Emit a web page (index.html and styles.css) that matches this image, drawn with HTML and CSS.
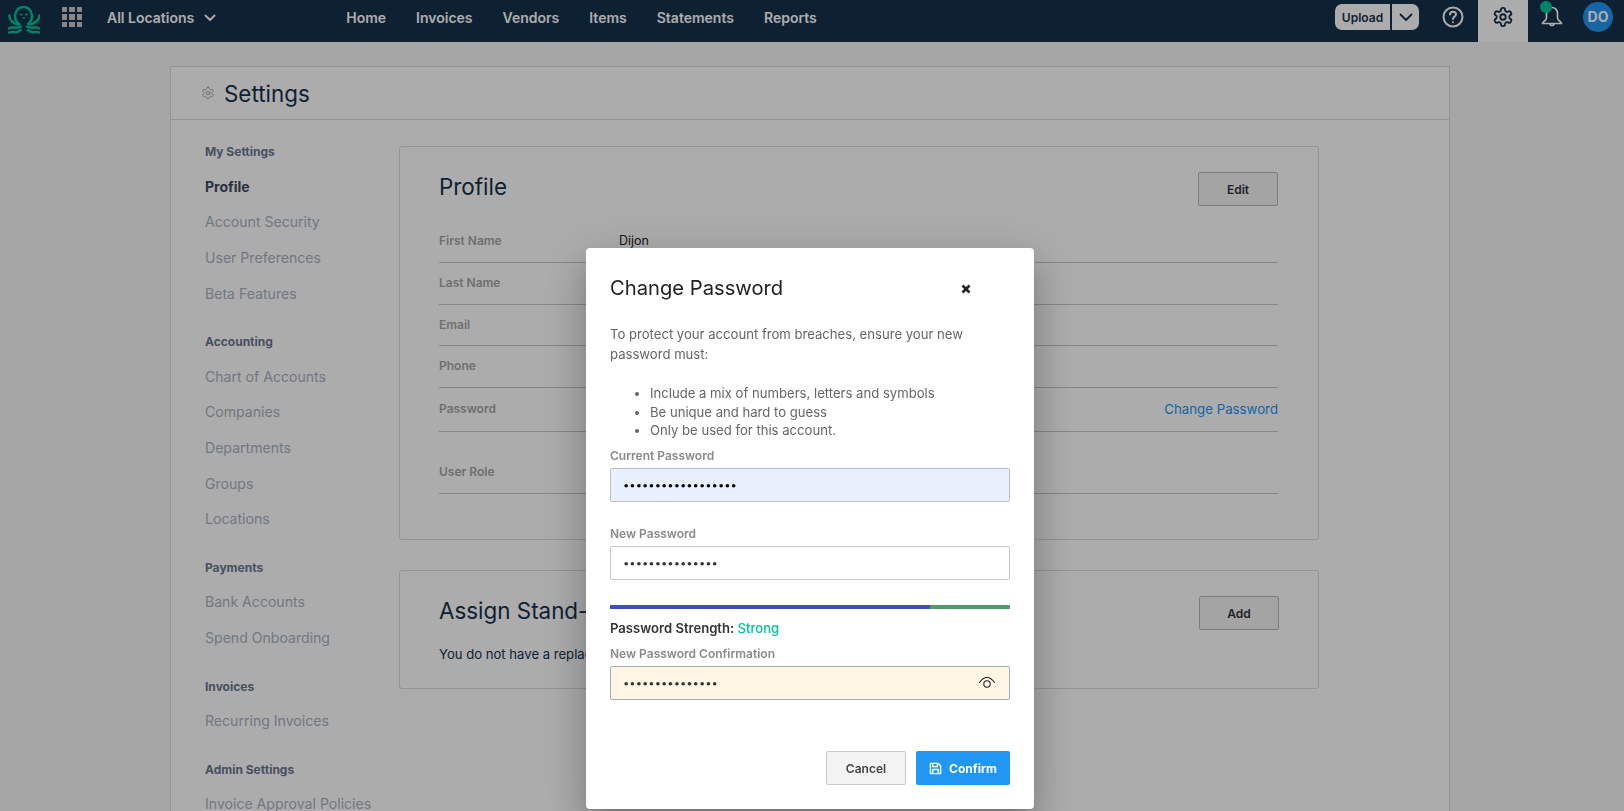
FILE: index.html
```html
<!DOCTYPE html>
<html lang="en">
<head>
<meta charset="utf-8">
<title>Settings</title>
<link rel="stylesheet" href="styles.css">
</head>
<body>
<header class="topbar">
  <svg class="logo" viewBox="8 3 32 30" width="32" height="30" fill="none" stroke="#00c49a" stroke-width="2.400" stroke-linecap="round">
    <path d="M18.500 20.500C15.500 18 14.500 14 15.500 10.500C16.800 6 20 4 23.500 4C27 4 30.200 6 31.500 10.500C32.500 14 31.500 18 28.500 20.500"/>
    <path d="M9.500 12.500C9 17 13 21 19.500 21.500M39.500 12.500C39 17 35 21 28.500 21.500" />
    <path d="M9 25.500C13 22.500 16 26.500 21 23.500M39.500 25.500C35 22.500 32 26.500 27 23.500"/>
    <path d="M9 29.500C13 27.500 17 31.500 20.500 27M39.500 29.500C35.500 27.500 31.500 31.500 28 27"/>
    <path d="M20.500 11.500h1.500M25.500 11.500h1.500M23 15h1.500" stroke-width="1.500"/>
  </svg>
  <div class="apps"><i></i><i></i><i></i><i></i><i></i><i></i><i></i><i></i><i></i></div>
  <div class="location">All Locations
    <svg width="12" height="8" viewBox="0 0 12 8" fill="none" stroke="currentColor" stroke-width="1.800" stroke-linecap="round" stroke-linejoin="round"><path d="M1.500 1.500 6 6l4.500-4.500"/></svg>
  </div>
  <nav class="mainnav">
    <a>Home</a><a>Invoices</a><a>Vendors</a><a>Items</a><a>Statements</a><a>Reports</a>
  </nav>
  <div class="upload">
    <span class="upload-label">Upload</span>
    <span class="upload-caret"><svg width="14" height="9" viewBox="0 0 14 9" fill="none" stroke="#16324c" stroke-width="1.800" stroke-linecap="round" stroke-linejoin="round"><path d="M1.500 1.500 7 7l5.500-5.500"/></svg></span>
  </div>
  <svg class="help" width="22" height="22" viewBox="0 0 22 22" fill="none" stroke="#fff" stroke-width="2" stroke-linecap="round">
    <circle cx="11" cy="11" r="9.500"/>
    <path d="M8 8.500C8 6.600 9.400 5.700 11 5.700C12.700 5.700 14 6.800 14 8.300C14 10.500 11 10.500 11 13"/>
    <path d="M11 16.200v.1"/>
  </svg>
  <div class="gear-tab">
    <svg width="22" height="22" viewBox="0 0 24 24" fill="none" stroke="#16324c" stroke-width="2" stroke-linecap="round" stroke-linejoin="round">
      <path d="M12.220 2h-.44a2 2 0 0 0-2 2v.180a2 2 0 0 1-1 1.730l-.43.250a2 2 0 0 1-2 0l-.150-.080a2 2 0 0 0-2.730.730l-.220.380a2 2 0 0 0 .730 2.730l.150.100a2 2 0 0 1 1 1.720v.510a2 2 0 0 1-1 1.740l-.150.090a2 2 0 0 0-.730 2.730l.220.380a2 2 0 0 0 2.730.730l.150-.080a2 2 0 0 1 2 0l.430.250a2 2 0 0 1 1 1.730V20a2 2 0 0 0 2 2h.440a2 2 0 0 0 2-2v-.180a2 2 0 0 1 1-1.730l.430-.250a2 2 0 0 1 2 0l.150.080a2 2 0 0 0 2.730-.730l.220-.390a2 2 0 0 0-.730-2.730l-.150-.080a2 2 0 0 1-1-1.740v-.500a2 2 0 0 1 1-1.740l.150-.090a2 2 0 0 0 .730-2.730l-.220-.380a2 2 0 0 0-2.730-.730l-.150.080a2 2 0 0 1-2 0l-.430-.250a2 2 0 0 1-1-1.730V4a2 2 0 0 0-2-2z"/>
      <circle cx="12" cy="12" r="3"/>
    </svg>
  </div>
  <div class="bell">
    <svg width="24" height="24" viewBox="0 0 24 24" fill="none" stroke="#fff" stroke-width="1.700" stroke-linecap="round" stroke-linejoin="round">
      <path d="M6.500 15V10.500C6.500 7 9 4.500 12 4.500C15 4.500 17.500 7 17.500 10.500V15C17.500 17.500 22 19.500 21.500 20.500H2.500C2 19.500 6.500 17.500 6.500 15Z"/>
      <path d="M10 21C10.300 23 13.700 23 14 21"/>
    </svg>
    <span class="bell-dot"></span>
  </div>
  <div class="avatar">DO</div>
</header>

<main class="panel">
  <div class="panel-head">
    <svg width="14" height="14" viewBox="0 0 24 24" fill="none" stroke="#8a8a8a" stroke-width="1.200" stroke-linecap="round" stroke-linejoin="round">
      <path d="M12.220 2h-.44a2 2 0 0 0-2 2v.180a2 2 0 0 1-1 1.730l-.43.250a2 2 0 0 1-2 0l-.150-.080a2 2 0 0 0-2.730.730l-.220.380a2 2 0 0 0 .730 2.730l.150.100a2 2 0 0 1 1 1.720v.510a2 2 0 0 1-1 1.740l-.150.090a2 2 0 0 0-.730 2.730l.220.380a2 2 0 0 0 2.730.730l.150-.080a2 2 0 0 1 2 0l.430.250a2 2 0 0 1 1 1.730V20a2 2 0 0 0 2 2h.440a2 2 0 0 0 2-2v-.180a2 2 0 0 1 1-1.730l.430-.250a2 2 0 0 1 2 0l.150.080a2 2 0 0 0 2.730-.730l.220-.390a2 2 0 0 0-.730-2.730l-.150-.080a2 2 0 0 1-1-1.740v-.500a2 2 0 0 1 1-1.740l.150-.090a2 2 0 0 0 .730-2.730l-.220-.380a2 2 0 0 0-2.730-.730l-.150.080a2 2 0 0 1-2 0l-.430-.250a2 2 0 0 1-1-1.730V4a2 2 0 0 0-2-2z"/>
      <circle cx="12" cy="12" r="3"/>
    </svg>
    <h1>Settings</h1>
  </div>
  <div class="panel-body">
    <aside class="sidebar">
      <section class="side-group">
        <h2>My Settings</h2>
        <a class="active">Profile</a><a>Account Security</a><a>User Preferences</a><a>Beta Features</a>
      </section>
      <section class="side-group">
        <h2>Accounting</h2>
        <a>Chart of Accounts</a><a>Companies</a><a>Departments</a><a>Groups</a><a>Locations</a>
      </section>
      <section class="side-group">
        <h2>Payments</h2>
        <a>Bank Accounts</a><a>Spend Onboarding</a>
      </section>
      <section class="side-group">
        <h2>Invoices</h2>
        <a>Recurring Invoices</a>
      </section>
      <section class="side-group">
        <h2>Admin Settings</h2>
        <a>Invoice Approval Policies</a>
      </section>
    </aside>
    <div class="content">
      <section class="card profile">
        <div class="card-head">
          <h3>Profile</h3>
          <button class="btn-ghost">Edit</button>
        </div>
        <div class="row"><span class="row-label">First Name</span><span class="row-value">Dijon</span></div>
        <div class="row"><span class="row-label">Last Name</span></div>
        <div class="row"><span class="row-label">Email</span></div>
        <div class="row"><span class="row-label">Phone</span></div>
        <div class="row row-tall"><span class="row-label">Password</span><a class="row-link">Change Password</a></div>
        <div class="row row-role"><span class="row-label">User Role</span></div>
      </section>
      <section class="card standin">
        <div class="card-head">
          <h3>Assign Stand-In</h3>
          <button class="btn-ghost">Add</button>
        </div>
        <p class="standin-text">You do not have a replacement assigned.</p>
      </section>
    </div>
  </div>
</main>

<div class="overlay">
  <div class="modal">
    <div class="modal-head">
      <h4>Change Password</h4>
      <svg class="close" width="10" height="10" viewBox="0 0 10 10" fill="none" stroke="#222" stroke-width="2.600"><path d="M1.500 1.500 8.500 8.500M8.500 1.500 1.500 8.500"/></svg>
    </div>
    <p class="intro">To protect your account from breaches, ensure your new password must:</p>
    <ul class="rules">
      <li>Include a mix of numbers, letters and symbols</li>
      <li>Be unique and hard to guess</li>
      <li>Only be used for this account.</li>
    </ul>
    <label class="field-label">Current Password</label>
    <input class="field field-filled" type="password" value="aaaaaaaaaaaaaaaaaa">
    <label class="field-label label-new">New Password</label>
    <input class="field" type="password" value="aaaaaaaaaaaaaaa">
    <div class="strength-bar"><span class="strength-a"></span><span class="strength-b"></span></div>
    <div class="strength-text">Password Strength: <span class="strength-word">Strong</span></div>
    <label class="field-label label-confirm">New Password Confirmation</label>
    <div class="field-wrap">
      <input class="field field-warn" type="password" value="aaaaaaaaaaaaaaa">
      <svg class="eye" width="18" height="14" viewBox="0 0 18 14" fill="none" stroke="#222" stroke-width="1.100" stroke-linecap="round"><path d="M1.500 6.500C4 3 6.500 1.500 9 1.500C11.500 1.500 14 3 16.500 6.500"/><circle cx="9" cy="8" r="3.200"/></svg>
    </div>
    <div class="modal-actions">
      <button class="btn-cancel">Cancel</button>
      <button class="btn-confirm">
        <svg width="13" height="13" viewBox="0 0 14 14" fill="none" stroke="#fff" stroke-width="1.500" stroke-linejoin="round"><path d="M1.500 1.500h8.500l2.500 2.500v8.500h-11z"/><path d="M4 1.500v3.500h5v-3.500M4 12.500v-4.500h6v4.500"/></svg>
        Confirm
      </button>
    </div>
  </div>
</div>
</body>
</html>
```

FILE: styles.css
```css
* { box-sizing: border-box; }
html, body { margin: 0; height: 811px; overflow: hidden; }
body { background: #f6f6f8; font-family: Inter, "Liberation Sans", sans-serif; color: #16324c; }
h1, h2, h3, h4, p, ul { margin: 0; padding: 0; font-weight: 400; }

.topbar { height: 42px; background: #16324c; display: flex; align-items: center; padding-left: 8px; color: #fff; }
.logo { flex: none; }
.apps { margin-left: 22px; width: 20px; height: 20px; display: grid; grid-template-columns: repeat(3, 5.330px); grid-template-rows: repeat(3, 5.330px); gap: 2px; flex: none; margin-top: -8px; margin-right: 1px; }
.apps i { background: #c8c8c8; }
.location { margin-left: 24px; font-size: 14px; font-weight: 600; display: flex; align-items: center; gap: 10px; margin-top: -7px; white-space: nowrap; }
.mainnav { margin-left: 130px; display: flex; gap: 30px; font-size: 14px; font-weight: 600; margin-top: -7px; }
.mainnav a { color: #fff; }
.upload { margin-left: auto; width: 84px; height: 26px; background: #fff; border-radius: 7px; display: flex; margin-top: -8px; flex: none; }
.upload-label { width: 57px; border-right: 2px solid #16324c; font-size: 12px; font-weight: 600; color: #16324c; line-height: 28px; text-align: center; }
.upload-caret { flex: 1; display: flex; align-items: center; justify-content: center; }
.help { margin-left: 23px; margin-top: -8px; flex: none; }
.gear-tab { margin-left: 14px; width: 50px; height: 42px; background: #fff; display: flex; align-items: center; justify-content: center; padding-bottom: 8px; flex: none; }
.bell { position: relative; margin-left: 12px; width: 24px; height: 24px; margin-top: -12px; flex: none; }
.bell-dot { position: absolute; left: 0; top: -2px; width: 12px; height: 12px; border-radius: 50%; background: #00c49a; }
.avatar { margin-left: 19px; margin-right: 11px; width: 30px; height: 30px; border-radius: 50%; background: #2196f3; color: #fff; font-size: 14px; font-weight: 700; line-height: 30px; text-align: center; margin-top: -8px; flex: none; }

.panel { margin: 24px 0 0 170px; width: 1280px; background: #fff; border: 1px solid #dcdcdc; height: 900px; }
.panel-head { height: 53px; border-bottom: 1px solid #dcdcdc; display: flex; align-items: center; padding-left: 30px; gap: 9px; }
.panel-head h1 { font-size: 22.400px; color: #16324c; }
.panel-body { display: flex; }
.sidebar { width: 228px; padding: 22px 0 0 34px; flex: none; }
.side-group { margin-bottom: 20.800px; }
.side-group h2 { font-size: 12px; font-weight: 700; color: #6b7790; line-height: 20px; margin-bottom: 6.500px; }
.side-group a { display: block; font-size: 14.080px; line-height: 35.700px; color: #a9b3c1; white-space: nowrap; }
.side-group a.active { color: #3d4b61; font-weight: 700; font-size: 14px; }

.content { width: 920px; padding-top: 26px; }
.card { border: 1px solid #dcdcdc; border-radius: 3px; padding: 25px 40px 0 39px; }
.card + .card { margin-top: 30px; }
.profile { height: 394px; }
.standin { height: 119px; }
.card-head { display: flex; justify-content: space-between; align-items: flex-start; height: 33px; }
.card-head h3 { font-size: 22.400px; line-height: 30px; color: #16324c; }
.profile .card-head { margin-bottom: 16px; }
.btn-ghost { width: 80px; height: 34px; background: #f3f3f3; border: 1px solid #bbb; border-radius: 2px; font: 600 12px Inter, sans-serif; color: #2b3340; }
.standin .btn-ghost { margin-right: -1px; }
.row { height: 41.750px; border-bottom: 1px solid #c8c8c8; padding-top: 11px; display: flex; line-height: 18px; }
.row-tall { height: 44px; padding-top: 12px; }
.row-role { height: 62px; padding-top: 31px; }
.row-label { width: 180px; font-size: 12px; font-weight: 600; color: #a6a6a6; }
.row-value { font-size: 12.500px; color: #222; }
.row-link { margin-left: auto; font-size: 13.250px; color: #2196f3; }
.standin-text { margin-top: 17px; font-size: 13.120px; color: #16324c; white-space: nowrap; }

.overlay { position: fixed; inset: 0; background: rgba(0, 0, 0, .325); }
.modal { position: absolute; left: 586px; top: 248px; width: 448px; height: 561px; background: #fff; border-radius: 4px; padding: 25px 24px 24px; box-shadow: 0 11px 15px -7px rgba(0, 0, 0, .2), 0 24px 38px 3px rgba(0, 0, 0, .14), 0 9px 46px 8px rgba(0, 0, 0, .12); display: flex; flex-direction: column; }
.modal-head { display: flex; align-items: center; justify-content: space-between; height: 28px; padding-right: 39px; }
.modal-head h4 { font-size: 20.200px; color: #222; }
.close { margin-top: 3px; }
.intro { margin-top: 23px; font-size: 13.120px; line-height: 20px; color: #666; }
.rules { margin-top: 20px; padding-left: 40px; font-size: 13.120px; line-height: 18.500px; color: #666; }
.field-label { display: block; font-size: 12px; font-weight: 600; color: #8a8a8a; line-height: 16px; margin-top: 8px; margin-bottom: 4px; }
.label-new { margin-top: 24px; }
.label-confirm { margin-top: 9px; }
.field { display: block; width: 100%; height: 34px; border: 1px solid #c8c8c8; border-radius: 2px; padding: 0 12px; font-family: Inter, sans-serif; font-size: 11.250px; color: #333; background: #fff; outline: none; }
.field-filled { background: #e8f0fe; border-color: #b8bfc8; color: #000; }
.field-warn { background: #fff5e5; border-color: #a8aeb5; }
.field-wrap { position: relative; }
.eye { position: absolute; right: 14px; top: 10px; }
.strength-bar { margin-top: 25px; height: 4px; display: flex; }
.strength-a { width: 320px; background: #3f51b5; }
.strength-b { flex: 1; background: #4f9d6e; }
.strength-text { margin-top: 11px; font-size: 13.100px; font-weight: 600; line-height: 17px; color: #333; }
.strength-word { font-weight: 500; color: #00c49a; }
.modal-actions { margin-top: auto; display: flex; justify-content: flex-end; gap: 10px; }
.btn-cancel { width: 80px; height: 34px; background: #f3f3f3; border: 1px solid #c8c8c8; border-radius: 2px; font: 600 12px Inter, sans-serif; color: #444; }
.btn-confirm { width: 94px; height: 34px; background: #2196f3; border: 0; border-radius: 2px; font: 700 12px Inter, sans-serif; color: #fff; display: flex; align-items: center; justify-content: center; gap: 7px; }
```
